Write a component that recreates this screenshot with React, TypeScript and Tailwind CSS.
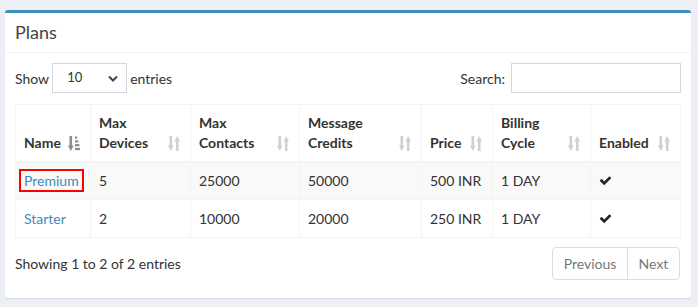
import React from 'react';

const SortBoth = () => (
  <svg width="12" height="15" viewBox="0 0 12 15" className="text-[#d0d0d0]" fill="currentColor">
    <rect x="1.5" y="0" width="2.6" height="10" />
    <polygon points="0,9.5 5.6,9.5 2.8,15" />
    <polygon points="6.4,5.5 12,5.5 9.2,0" />
    <rect x="7.9" y="5" width="2.6" height="10" />
  </svg>
);

const SortAsc = () => (
  <svg width="12" height="15" viewBox="0 0 12 15" className="text-[#8c8c8c]" fill="currentColor">
    <rect x="1.5" y="0" width="2.6" height="10" />
    <polygon points="0,9.5 5.6,9.5 2.8,15" />
    <rect x="7" y="0.5" width="2.2" height="2.2" />
    <rect x="7" y="4.3" width="3.4" height="2.2" />
    <rect x="7" y="8.1" width="4.4" height="2.2" />
    <rect x="7" y="11.9" width="5" height="2.2" />
  </svg>
);

const Check = () => (
  <svg width="13" height="13" viewBox="0 0 1792 1792" fill="#222">
    <path d="M1671 566q0 40-28 68l-724 724-136 136q-28 28-68 28t-68-28l-136-136-362-362q-28-28-28-68t28-68l136-136q28-28 68-28t68 28l294 295 656-657q28-28 68-28t68 28l136 136q28 28 28 68z" />
  </svg>
);

const columns = [
  { label: ['Name'], w: 'w-[75px]', asc: true },
  { label: ['Max', 'Devices'], w: 'w-[100px]' },
  { label: ['Max', 'Contacts'], w: 'w-[109px]' },
  { label: ['Message', 'Credits'], w: 'w-[122px]' },
  { label: ['Price'], w: 'w-[71px]' },
  { label: ['Billing', 'Cycle'], w: 'w-[98px]' },
  { label: ['Enabled'], w: 'w-[90px]' },
];

const plans = [
  { name: 'Premium', devices: '5', contacts: '25000', credits: '50000', price: '500 INR', cycle: '1 DAY', marked: true },
  { name: 'Starter', devices: '2', contacts: '10000', credits: '20000', price: '250 INR', cycle: '1 DAY', marked: false },
];

export default function App() {
  return (
    <div
      className="w-[698px] h-[307px] bg-[#ecf0f5] pt-[10px] pl-[5px] text-[14px] text-[#333]"
      style={{ fontFamily: 'Lato, "Open Sans", sans-serif' }}
    >
      <div className="w-[686px] h-[288px] bg-white border-t-[3px] border-[#3c8dbc] rounded-[3px] shadow-[0_1px_1px_rgba(0,0,0,0.1)]">
        <div className="h-[40px] px-[10px] flex items-center border-b border-[#f4f4f4]">
          <h3 className="text-[18px] text-[#444] leading-none -mt-[2px]">Plans</h3>
        </div>
        <div className="px-[10px] pt-[10px]">
          <div className="flex items-center justify-between h-[30px]">
            <label className="flex items-center gap-[3px]">
              <span>Show</span>
              <div className="relative w-[75px] h-[30px] border border-[#d2d6de] flex items-center">
                <span className="pl-[14px] text-[13px]">10</span>
                <svg className="absolute right-[8px] top-[11px]" width="10" height="7" viewBox="0 0 10 7">
                  <path d="M1 1.5 L5 5.5 L9 1.5" stroke="#444" strokeWidth="2" fill="none" />
                </svg>
              </div>
              <span>entries</span>
            </label>
            <label className="flex items-center gap-[6px]">
              <span>Search:</span>
              <input className="w-[170px] h-[30px] border border-[#d2d6de] outline-none" />
            </label>
          </div>

          <table className="mt-[11px] w-[665px] border border-[#f4f4f4] border-collapse table-fixed">
            <thead>
              <tr>
                {columns.map((c, i) => (
                  <th
                    key={i}
                    className={`${c.w} relative h-[57px] align-bottom text-left font-bold px-[8px] pb-[8px] leading-[20px] border border-[#f4f4f4] border-b-2`}
                  >
                    {c.label.map((l) => (
                      <div key={l}>{l}</div>
                    ))}
                    <span className="absolute right-[10px] bottom-[10px] flex">
                      {c.asc ? <SortAsc /> : <SortBoth />}
                    </span>
                  </th>
                ))}
              </tr>
            </thead>
            <tbody>
              {plans.map((p, i) => (
                <tr key={p.name} className={i === 0 ? 'bg-[#f9f9f9]' : 'bg-white'}>
                  <td className="h-[38px] px-[8px] border border-[#f4f4f4]">
                    {p.marked ? (
                      <span className="inline-block border-2 border-[#ff0000] px-[3px] -ml-[5px] leading-[19px] text-[#3c8dbc]">
                        {p.name}
                      </span>
                    ) : (
                      <span className="text-[#3c8dbc]">{p.name}</span>
                    )}
                  </td>
                  <td className="px-[8px] border border-[#f4f4f4]">{p.devices}</td>
                  <td className="px-[8px] border border-[#f4f4f4]">{p.contacts}</td>
                  <td className="px-[8px] border border-[#f4f4f4]">{p.credits}</td>
                  <td className="px-[8px] border border-[#f4f4f4]">{p.price}</td>
                  <td className="px-[8px] border border-[#f4f4f4]">{p.cycle}</td>
                  <td className="px-[8px] border border-[#f4f4f4]">
                    <Check />
                  </td>
                </tr>
              ))}
            </tbody>
          </table>

          <div className="mt-[9px] w-[665px] flex items-center justify-between">
            <span>Showing 1 to 2 of 2 entries</span>
            <div className="flex h-[33px] border border-[#ddd] rounded-[4px] text-[#777]">
              <span className="w-[75px] flex items-center justify-center border-r border-[#ddd]">Previous</span>
              <span className="w-[51px] flex items-center justify-center">Next</span>
            </div>
          </div>
        </div>
      </div>
    </div>
  );
}
